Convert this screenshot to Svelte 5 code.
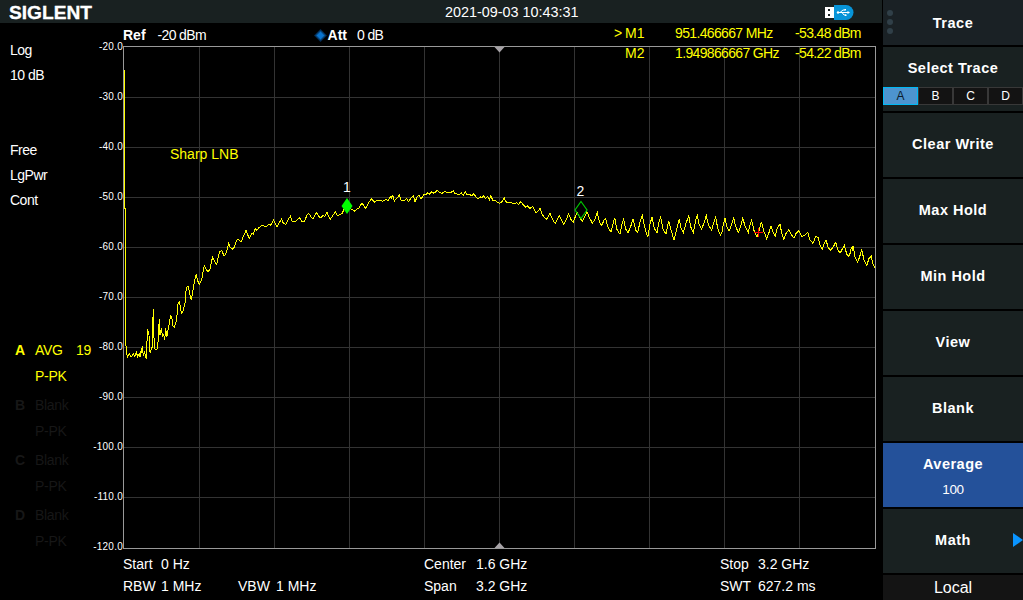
<script lang="ts">
    interface SweepBlock {
        x: number;
        y: number;
        samples: string;
    }

    interface TraceInfo {
        id: string;
        mode: string;
        count?: number;
        detector: string;
    }

    // samples are offsets from the block origin, in thirds of a pixel
    const sweep: SweepBlock[] = [
        {
            x: 120, y: 280,
            samples: '14,-630 14,-216 16,-214 16,195 19,200 21,225 23,230 28,222 32,230 36,228 40,222 44,230 49,217 53,230 58,222 60,230 62,213 64,220 67,198 70,227 74,213 76,230 79,233 80,200 83,148 87,165 88,213 91,217 94,208 97,200 98,140 100,87 101,140 103,205 109,209 113,205 115,170 118,118 120,165 124,145 128,172 131,162 134,180 137,145 140,172 146,140 152,106 157,120 159,137 163,142 168,125 172,100 174,72 178,67 181,78 184,100 190,92 194,72'
        },
        {
            x: 182, y: 220,
            samples: '9,250 13,204 18,197 23,220 28,240 34,205 38,180 43,163 47,183 52,192 59,180 63,155 67,137 73,150 79,155 85,145 88,125 92,112 98,125 104,134 110,105 114,94 120,92 126,109 133,98 140,71'
        },
        {
            x: 230, y: 170,
            samples: '0,230 7,238 12,233 20,210 25,208 33,217 40,200 48,181 53,194 58,206 62,196 66,188 70,193 76,176 80,181 88,172 96,166 103,168 110,168 117,163 123,166 127,156 131,150 135,160 141,170 147,160 155,146 159,158 167,163 172,155 175,147 181,139 187,155 194,156 200,152 208,142 215,153 224,153 230,137 236,130 243,140 249,147 254,137 260,127 268,141 274,142 279,136 284,140 291,127 296,140 301,148 308,137 316,125 322,137 330,134 337,130 342,118 351,110 360,116 365,118 370,120 375,124 381,117 387,114 395,100 400,104 407,116 415,100 425,86 433,97 441,90 452,90 458,94 468,88 475,92 480,80 484,84 488,76 493,93 500,85 508,76 514,92 524,91 530,86 536,95 543,83 550,78 555,95 562,80 567,75 573,88 582,73 588,75 593,67 598,73'
        },
        {
            x: 420, y: 170,
            samples: '35,66 42,70 52,61 58,67 66,70 74,65 84,68 92,68 100,62 104,70 112,72 118,75 124,69 130,75 136,66 142,75 150,74 155,78 160,71 168,80 174,88 180,80 186,84 191,77 197,86 203,79 208,90 212,77 218,90 226,90 232,97 238,100 246,95 253,84 257,94 264,99 274,98 282,101 290,98 296,104 302,94 310,105 318,112 322,107 330,115 338,110 343,118 349,129 354,124 360,115 366,132 375,145 381,148 385,140 390,130 398,149 406,161 413,145 418,137 425,151 431,163 437,152 446,131 452,148 460,157 466,140 472,127 480,145 487,153 493,143 500,126'
        },
        {
            x: 570, y: 180,
            samples: '52,98 57,110 67,129 74,120 82,97 88,125 95,137 101,122 107,115 113,140 123,157 129,132 134,113 140,147 150,163 155,135 161,118 167,147 174,158 181,143 189,118 197,150 203,157 210,127 217,107 225,145 233,172 239,137 246,110 253,145 261,158 266,130 272,112 279,148 288,162 296,122 303,150 312,180 320,148 328,117 333,145 340,158 348,130 356,107 362,140 370,158 377,120 382,106 388,135 395,148 402,128 409,107 416,137 425,150 432,125 437,112 443,145 450,163'
        },
        {
            x: 720, y: 180,
            samples: '2,165 6,155 10,132 15,115 20,140 26,152 30,148 35,132 41,113 47,140 55,157 62,140 68,115 76,140 85,157 90,135 95,121 103,155 111,172 118,150 124,125 132,155 140,176 148,155 153,137 160,160 166,168 172,145 180,132 185,160 191,178 197,162 206,150 213,162 222,175 228,160 236,152 246,170 256,165 263,157 270,180 279,190 287,170 294,172 300,195 307,208 313,190 318,181 325,203 332,210 340,200 347,187 353,208 360,220 367,207 373,196 380,222 387,229 392,215 394,202 397,208 399,198 405,230 413,246 419,230 425,208 432,240 440,257 447,235 454,229 459,252 464,263'
        }
    ];

    const points = sweep
        .flatMap((block) => block.samples.split(' ').map((pair) => {
            const [dx, dy] = pair.split(',').map(Number);
            return `${(block.x + dx / 3).toFixed(1)},${(block.y + dy / 3).toFixed(1)}`;
        }))
        .join(' ');

    const levels = Array.from({ length: 11 }, (_, i) => (-20 - i * 10).toFixed(1));
    const columns = Array.from({ length: 9 }, (_, i) => 199.5 + i * 75);
    const rows = Array.from({ length: 9 }, (_, i) => 97.5 + i * 50);

    const traces: TraceInfo[] = [
        { id: 'A', mode: 'AVG', count: 19, detector: 'P-PK' },
        { id: 'B', mode: 'Blank', detector: 'P-PK' },
        { id: 'C', mode: 'Blank', detector: 'P-PK' },
        { id: 'D', mode: 'Blank', detector: 'P-PK' }
    ];

    const menu = ['Clear Write', 'Max Hold', 'Min Hold', 'View', 'Blank', 'Average', 'Math'];

    let selected = $state('A');
    let active = $state('Average');
</script>

<div class="analyzer">
    <div class="display">
        <header class="topbar">
            <svg class="logo" width="90" height="23">
                <text x="1" y="18.5" textLength="83" lengthAdjust="spacingAndGlyphs">SIGLENT</text>
            </svg>
            <span class="clock">2021-09-03 10:43:31</span>
            <svg class="usb" width="30" height="16" viewBox="0 0 30 16">
                <path d="M0 2h9v11H0z" fill="#fff"/>
                <path d="M3 4h2v2H3zM3 9h2v2H3z" fill="#192121"/>
                <path d="M9 0h12a7.5 7.5 0 0 1 0 15H9z" fill="#0794d8"/>
                <path d="M13 7.5h10M15 7.5l3-2.5h2M17 7.5l2 2.5h2" fill="none" stroke="#fff"/>
                <circle cx="13" cy="7.5" r="1.2" fill="#fff"/>
                <path d="M19.5 4h1.5v1.5h-1.5zM20 9.5h1.5V11H20zM22.5 6l2.5 1.5-2.5 1.5z" fill="#fff"/>
            </svg>
        </header>

        <div class="levels">
            <b>Ref</b>
            <span class="ref">-20 dBm</span>
            <svg class="knob" width="13" height="13" viewBox="0 0 14 14">
                <path d="M7 0l7 7-7 7-7-7z" fill="#042a50"/>
                <path d="M7 1.5L12.5 7 7 12.5 1.5 7z" fill="#07518f"/>
                <path d="M7 3l4 4-4 4-4-4z" fill="#0a74d0"/>
            </svg>
            <b class="att-label">Att</b>
            <span class="att">0 dB</span>
        </div>

        <div class="middle">
            <aside class="status">
                <div>Log</div>
                <div>10 dB</div>
                <div class="sweep-mode">Free</div>
                <div>LgPwr</div>
                <div>Cont</div>
                <div class="traces">
                    {#each traces as trace}
                        <div class="trace" class:on={trace.mode !== 'Blank'}>
                            <b>{trace.id}</b>
                            <span>{trace.mode}</span>
                            <span>{trace.count ?? ''}</span>
                            <span class="detector">{trace.detector}</span>
                        </div>
                    {/each}
                </div>
            </aside>

            <div class="axis">
                {#each levels as level}
                    <span>{level}</span>
                {/each}
            </div>

            <div class="plot">
                <svg width="753" height="503" viewBox="123 46 753 503">
                    <g class="grid">
                        {#each columns as x}
                            <line x1={x} y1="47" x2={x} y2="548"/>
                        {/each}
                        {#each rows as y}
                            <line x1="124" y1={y} x2="875" y2={y}/>
                        {/each}
                    </g>
                    <rect class="frame" x="123.5" y="46.5" width="752" height="502"/>
                    <path d="M494.5 47h10l-5 5.5zM494.5 548h10l-5-5.5z" fill="#a6a2a6"/>
                    <polyline class="sweep" {points}/>
                    <path d="M347 198l5.5 8-5.5 8-5.5-8z" fill="#0f0"/>
                    <path d="M581 201.5l6 8.5-6 8.5-6-8.5z" fill="none" stroke="#00c800" stroke-width="1.2"/>
                    <path d="M754 232.5h9M758.5 228v9" stroke="#f00"/>
                    <text x="343" y="192">1</text>
                    <text x="576.5" y="196">2</text>
                </svg>
                <span class="note">Sharp LNB</span>
                <div class="markers">
                    <span>&gt;</span><span>M1</span><span class="reading">951.466667 MHz</span><span class="reading">-53.48 dBm</span>
                    <span></span><span>M2</span><span class="reading">1.949866667 GHz</span><span class="reading">-54.22 dBm</span>
                </div>
            </div>
        </div>

        <footer class="settings">
            <div class="pair narrow"><span>Start</span><span>0 Hz</span></div>
            <div></div>
            <div class="pair"><span>Center</span><span>1.6 GHz</span></div>
            <div class="pair narrow"><span>Stop</span><span>3.2 GHz</span></div>
            <div class="pair narrow"><span>RBW</span><span>1 MHz</span></div>
            <div class="pair narrow"><span>VBW</span><span>1 MHz</span></div>
            <div class="pair"><span>Span</span><span>3.2 GHz</span></div>
            <div class="pair narrow"><span>SWT</span><span>627.2 ms</span></div>
        </footer>
    </div>

    <nav class="side">
        <div class="title">
            <div class="dots"><i></i><i></i><i></i></div>
            Trace
        </div>
        <div class="select">
            <div class="caption">Select Trace</div>
            <div class="tabs">
                {#each traces as trace}
                    <button class="tab" class:selected={selected === trace.id} onclick={() => (selected = trace.id)}>{trace.id}</button>
                {/each}
            </div>
        </div>
        {#each menu as item}
            <button class="item" class:active={active === item} onclick={() => (active = item)}>
                <span>{item}</span>
                {#if item === 'Average'}
                    <span class="value">100</span>
                {/if}
                {#if item === 'Math'}
                    <svg class="arrow" width="10" height="14"><path d="M0 0l10 7-10 7z" fill="#0a94ff"/></svg>
                {/if}
            </button>
        {/each}
        <div class="local">Local</div>
    </nav>
</div>

<style>
    :global(body) {
        margin: 0;
        background: #000;
    }

    .analyzer {
        display: flex;
        gap: 1px;
        width: 1023px;
        height: 600px;
        overflow: hidden;
        background: #000;
        color: #fff;
        font-family: "Liberation Sans", Arial, sans-serif;
        font-size: 14px;
        white-space: nowrap;
    }

    .display {
        display: flex;
        flex-direction: column;
        width: 882px;
    }

    .topbar {
        display: flex;
        align-items: center;
        box-sizing: border-box;
        height: 23px;
        padding-left: 8px;
        background: #192121;
    }

    .logo text {
        font-size: 17.5px;
        font-weight: bold;
        fill: #fff;
        stroke: #fff;
        stroke-width: 0.3;
    }

    .clock {
        width: 134px;
        margin: 1px 246px 0 347px;
        font-size: 14.4px;
    }

    .usb {
        margin-top: 3px;
    }

    .levels {
        display: flex;
        align-items: center;
        height: 23px;
        padding: 1px 0 0 123px;
        box-sizing: border-box;
    }

    .ref {
        width: 157px;
        margin-left: 12px;
    }

    .ref,
    .att,
    .reading {
        letter-spacing: -0.65px;
    }

    .knob {
        flex-shrink: 0;
        margin-left: -1px;
    }

    .att-label {
        margin-left: 1px;
    }

    .att {
        margin-left: 10px;
    }

    .middle {
        display: flex;
        height: 503px;
    }

    .status {
        width: 93px;
        margin-top: -8px;
        letter-spacing: -0.5px;
        line-height: 25px;
    }

    .status > div {
        padding-left: 10px;
    }

    .status .sweep-mode {
        margin-top: 50px;
    }

    .status .traces {
        display: flex;
        flex-direction: column;
        gap: 3px;
        margin-top: 124px;
        padding-left: 15px;
    }

    .trace {
        display: grid;
        grid-template-columns: 20px 41px auto;
        grid-auto-rows: 26px;
        letter-spacing: -0.3px;
        line-height: 26px;
        color: #171717;
    }

    .trace.on {
        color: #ff0;
    }

    .detector {
        grid-column: 2;
    }

    .axis {
        width: 30px;
        margin-top: -24px;
        font-size: 10px;
        letter-spacing: 0.25px;
        line-height: 50px;
        text-align: right;
    }

    .axis span {
        display: block;
        height: 50px;
    }

    .plot {
        position: relative;
        width: 753px;
    }

    .plot svg {
        display: block;
    }

    .grid line {
        stroke: #333;
    }

    .frame {
        fill: none;
        stroke: #999;
    }

    .sweep {
        fill: none;
        stroke: #ff0;
        stroke-width: 1;
        shape-rendering: crispEdges;
    }

    .plot text {
        font-size: 14px;
        fill: #fff;
    }

    .note {
        position: absolute;
        left: 47px;
        top: 100px;
        color: #ff0;
    }

    .markers {
        position: absolute;
        left: 491px;
        top: -23px;
        display: grid;
        grid-template-columns: 11px 50px 120px auto;
        grid-auto-rows: 20px;
        line-height: 20px;
        color: #ff0;
    }

    .settings {
        display: grid;
        grid-template-columns: 115px 186px 296px auto;
        grid-auto-rows: 22px;
        padding: 4px 0 0 123px;
        line-height: 22px;
    }

    .pair {
        display: grid;
        grid-template-columns: 52px auto;
        justify-content: start;
    }

    .pair.narrow {
        grid-template-columns: 38px auto;
    }

    .side {
        display: flex;
        flex-direction: column;
        gap: 2px;
        width: 140px;
        font-size: 14.5px;
        font-weight: bold;
        letter-spacing: 0.5px;
        text-align: center;
    }

    .title {
        position: relative;
        height: 45px;
        line-height: 46px;
        background: #1a2125;
    }

    .dots {
        position: absolute;
        left: 4px;
        top: 10px;
        display: flex;
        flex-direction: column;
        gap: 3px;
    }

    .dots i {
        width: 6px;
        height: 6px;
        border-radius: 50%;
        background: #303f48;
    }

    .select {
        height: 64px;
        background: #192121;
    }

    .caption {
        height: 40px;
        line-height: 42px;
    }

    .tabs {
        display: flex;
    }

    .tab {
        flex: 1;
        height: 18px;
        padding: 0;
        border: 1px solid #383838;
        background: #131313;
        color: #fff;
        font: 12px/16px "Liberation Sans", Arial, sans-serif;
    }

    .tab.selected {
        border-color: #00b9f5;
        background: #4d94cf;
        color: #0c1c2c;
    }

    .item {
        position: relative;
        display: flex;
        flex-direction: column;
        align-items: center;
        justify-content: center;
        gap: 10px;
        height: 64px;
        padding: 0 0 3px;
        border: none;
        background: #192121;
        color: #fff;
        font: inherit;
        letter-spacing: inherit;
    }

    .item.active {
        padding: 2px 0 0;
        background: #24519a;
    }

    .value {
        font-size: 13.5px;
        font-weight: normal;
        letter-spacing: -0.4px;
    }

    .arrow {
        position: absolute;
        right: 0;
        top: 24px;
    }

    .local {
        height: 25px;
        background: #141414;
        font-size: 16px;
        font-weight: normal;
        letter-spacing: 0;
        line-height: 25px;
    }
</style>
